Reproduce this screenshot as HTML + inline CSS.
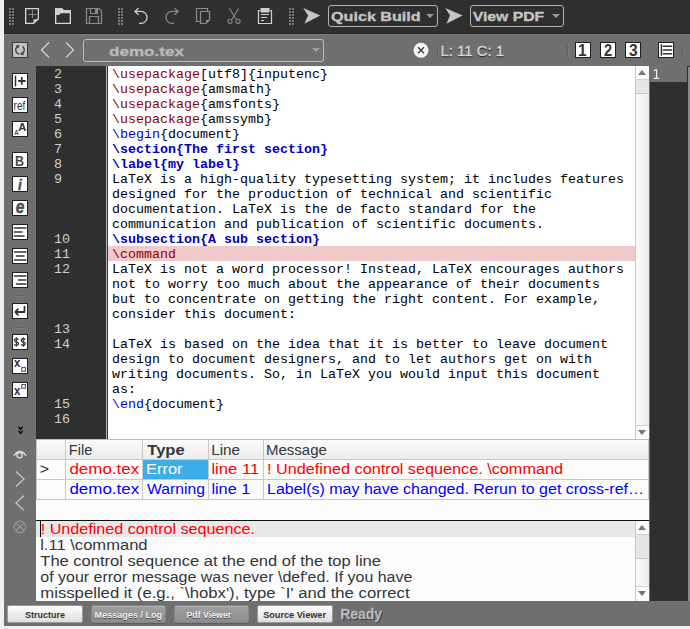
<!DOCTYPE html>
<html><head><meta charset="utf-8">
<style>
*{margin:0;padding:0;box-sizing:border-box}
html,body{width:690px;height:629px;overflow:hidden;background:#eff0f1;font-family:"Liberation Sans",sans-serif;position:relative}
.a{position:absolute}
svg{position:absolute;overflow:visible}
#top{left:4px;top:0;width:686px;height:34px;background:#2f2f2f}
#main{left:4px;top:34px;width:686px;height:592px;background:#6f6f6f}
#gutter{left:36px;top:66px;width:70px;height:373px;background:#2f2f2f}
#gutline{left:106px;top:66px;width:2px;height:373px;background:#b8b8b8;border-right:1px solid #2f2f2f}
#editor{left:108px;top:66px;width:527px;height:373px;background:#fff;overflow:hidden}
.ln{position:absolute;left:54px;top:67px;font-family:"Liberation Mono",monospace;font-size:13.33px;color:#cfcfcf;line-height:15px;white-space:pre}
.code{position:absolute;left:4px;top:1px;white-space:pre;font-family:"Liberation Mono",monospace;font-size:13.33px;line-height:15px;color:#000}
.kw{color:#8b0000}
.bl{color:#0000d8}
.bd{color:#0000c0;font-weight:bold}
#vsb{left:635px;top:66px;width:14px;height:373px;background:linear-gradient(90deg,#fbfbfb,#eceded);border-left:1px solid #c8c8c8}
#rpane{left:650px;top:82px;width:37px;height:519px;background:#2f2f2f}
#rline{left:687px;top:66px;width:3px;height:535px;background:#888;border-left:1px solid #2b2f33;border-top:1px solid #2b2f33}
.combo{position:absolute;border:1px solid #b4b4b4;border-radius:3px}
.tri{position:absolute;width:0;height:0;border-left:4px solid transparent;border-right:4px solid transparent;border-top:4px solid #9a9a9a}
.ltb{position:absolute;left:12px;width:16px;height:16px;background:#fff;border:1px solid #202020;overflow:hidden}
.sep{position:absolute;left:12px;width:16px;height:1px;background:#7e7e7e}
.tbl{left:36px;top:439px;width:613px;height:81px;background:#fcfcfc;border-top:1px solid #bdbdbd}
.cell{position:absolute;font-size:14px;line-height:20px;white-space:pre}
.log{left:36px;top:520px;width:613px;height:81px;background:#fcfcfc;border-top:1px solid #111;overflow:hidden}
.lg{position:absolute;left:4px;font-size:14px;line-height:16px;color:#31363b;white-space:pre}
.btn{position:absolute;top:605px;height:18px;border-radius:2px}
.bl1{background:linear-gradient(#fdfdfd,#dedede);border:1px solid #9a9a9a;color:#2a2a2a}
.bl2{background:linear-gradient(#a0a0a0,#8c8c8c);border:1px solid #858585;box-shadow:inset 0 1px 0 #adadad,0 1px 0 #5e5e5e}
</style></head>
<body>
<div class="a" id="top"></div>
<div class="a" id="main"></div>
<div class="a" style="left:4px;top:33px;width:686px;height:1px;background:#242424"></div>
<div class="a" style="left:4px;top:34px;width:686px;height:1px;background:#7b7b7b"></div>

<!-- top toolbar icons -->
<svg width="690" height="34" style="left:0;top:0">
 <g fill="#7a7a7a">
  <rect x="9" y="8" width="2" height="2"/><rect x="12" y="8" width="2" height="2"/>
  <rect x="9" y="11" width="2" height="2"/><rect x="12" y="11" width="2" height="2"/>
  <rect x="9" y="14" width="2" height="2"/><rect x="12" y="14" width="2" height="2"/>
  <rect x="9" y="17" width="2" height="2"/><rect x="12" y="17" width="2" height="2"/>
  <rect x="9" y="20" width="2" height="2"/><rect x="12" y="20" width="2" height="2"/>
  <rect x="9" y="23" width="2" height="2"/><rect x="12" y="23" width="2" height="2"/>
  <rect x="118" y="8" width="2" height="2"/><rect x="121" y="8" width="2" height="2"/>
  <rect x="118" y="11" width="2" height="2"/><rect x="121" y="11" width="2" height="2"/>
  <rect x="118" y="14" width="2" height="2"/><rect x="121" y="14" width="2" height="2"/>
  <rect x="118" y="17" width="2" height="2"/><rect x="121" y="17" width="2" height="2"/>
  <rect x="118" y="20" width="2" height="2"/><rect x="121" y="20" width="2" height="2"/>
  <rect x="118" y="23" width="2" height="2"/><rect x="121" y="23" width="2" height="2"/>
  <rect x="289" y="8" width="2" height="2"/><rect x="292" y="8" width="2" height="2"/>
  <rect x="289" y="11" width="2" height="2"/><rect x="292" y="11" width="2" height="2"/>
  <rect x="289" y="14" width="2" height="2"/><rect x="292" y="14" width="2" height="2"/>
  <rect x="289" y="17" width="2" height="2"/><rect x="292" y="17" width="2" height="2"/>
  <rect x="289" y="20" width="2" height="2"/><rect x="292" y="20" width="2" height="2"/>
  <rect x="289" y="23" width="2" height="2"/><rect x="292" y="23" width="2" height="2"/>
 </g>
 <!-- new -->
 <path d="M25.65 8.65H38.35V19L33.5 23.35H25.65Z" fill="none" stroke="#d6d6d6" stroke-width="1.3"/>
 <path d="M33.5 23.5V19.25H38.5Z" fill="#cfcfcf"/>
 <path d="M32.5 10V18M28.5 14.5H36.5" stroke="#8a8a8a" stroke-width="1"/>
 <!-- open -->
 <path d="M55 8H62L64 10H71V13.3H61L59 15H55Z" fill="#cfcfcf"/>
 <path d="M55.65 13.5V23.35H70.35V13" fill="none" stroke="#d6d6d6" stroke-width="1.3"/>
 <!-- save -->
 <path d="M86.5 8.5H99L101.5 11V23.5H86.5Z" fill="none" stroke="#8a8a8a" stroke-width="1.2"/>
 <path d="M90.5 8.5V13.5H97.5V8.5M89.5 23.5V16.5H98.5V23.5" fill="none" stroke="#8a8a8a" stroke-width="1.2"/>
 <rect x="95" y="9" width="2" height="4" fill="#8a8a8a"/>
 <!-- undo -->
 <path d="M138.5 8L135 11.4L138.5 14.8M135 11.4H141A6 6 0 0 1 141 23.4H139" fill="none" stroke="#d0d0d0" stroke-width="1.3"/>
 <!-- redo -->
 <path d="M174.5 8L178 11.4L174.5 14.8M178 11.4H172A6 6 0 0 0 172 23.4H174" fill="none" stroke="#8a8a8a" stroke-width="1.3"/>
 <!-- copy -->
 <path d="M200.5 21.5H196.5V8.5H207.5V11" fill="none" stroke="#8c8c8c" stroke-width="1.2"/>
 <path d="M200.5 11.5H209.5V20L206 23.5H200.5Z" fill="none" stroke="#8c8c8c" stroke-width="1.2"/>
 <path d="M206 23.5V20H209.5Z" fill="#8c8c8c"/>
 <!-- cut -->
 <path d="M229.5 8.5L236 19.2M238.5 8.5L232 19.2" stroke="#8a8a8a" stroke-width="1.1"/>
 <circle cx="230" cy="21.3" r="2.1" fill="none" stroke="#8a8a8a" stroke-width="1.1"/>
 <circle cx="238" cy="21.3" r="2.1" fill="none" stroke="#8a8a8a" stroke-width="1.1"/>
 <!-- paste -->
 <path d="M260 10.5H258.5V23.5H271.5V10.5H270" fill="none" stroke="#d0d0d0" stroke-width="1.2"/>
 <rect x="260.5" y="8" width="9" height="4.5" fill="#cfcfcf"/>
 <path d="M261 14.5H269M261 17.5H267M261 20.5H264" stroke="#d0d0d0" stroke-width="1"/>
 <!-- run arrows -->
 <path d="M303.3 8L320.2 15.5L304.4 23.8L308 15.5Z" fill="#c4c4c4"/>
 <path d="M445.3 8L462.6 15.5L446.4 23.7L450 15.5Z" fill="#c4c4c4"/>
</svg>
<div class="combo" style="left:328px;top:5px;width:110px;height:22px;"></div>
<div class="tri" style="left:426px;top:14px"></div>
<div class="combo" style="left:470px;top:5px;width:94px;height:22px;"></div>
<div class="tri" style="left:552px;top:14px"></div>

<!-- second row -->
<svg width="16" height="16" style="left:12px;top:42px">
 <rect x="0.5" y="0.5" width="15" height="15" fill="#c2c2c2" stroke="#3a3a3a"/>
 <path d="M5.5 4.5A4.3 4.3 0 0 0 7.3 12.2M10.5 4.5A4.3 4.3 0 0 1 8.7 12.2" fill="none" stroke="#3a3a3a" stroke-width="1.2"/>
 <path d="M4 3L7.6 3.6L6 6.6Z M12 13L8.4 12.4L10 9.4Z" fill="#3a3a3a"/>
</svg>
<svg width="690" height="30" style="left:0;top:34px">
 <path d="M49 8.5L41.5 16L49 23.5M66 8.5L73.5 16L66 23.5" fill="none" stroke="#d6d6d6" stroke-width="1.2"/>
 <circle cx="421" cy="16.2" r="7.5" fill="#f4f4f4"/>
 <path d="M418 13.2L424 19.2M424 13.2L418 19.2" stroke="#3a3a3a" stroke-width="1.3"/>
 <rect x="437" y="11" width="1" height="11" fill="#626262"/><rect x="438" y="11" width="1" height="11" fill="#7a7a7a"/>
 <rect x="567" y="11" width="1" height="11" fill="#626262"/><rect x="568" y="11" width="1" height="11" fill="#7a7a7a"/>
 <rect x="682" y="11" width="1" height="11" fill="#626262"/><rect x="683" y="11" width="1" height="11" fill="#7a7a7a"/>
</svg>
<div class="combo" style="left:83px;top:39px;width:241px;height:23px;border-color:#bdbdbd"></div>
<div class="tri" style="left:312px;top:48px;border-top-color:#a0a0a0"></div>
<svg width="120" height="20" style="left:570px;top:40px">
 <rect x="5.5" y="2.5" width="15" height="15" fill="#fff" stroke="#1e1e1e"/>
 <rect x="30.5" y="2.5" width="15" height="15" fill="#fff" stroke="#1e1e1e"/>
 <rect x="55.5" y="2.5" width="15" height="15" fill="#fff" stroke="#1e1e1e"/>
 <rect x="88.5" y="2.5" width="15" height="15" fill="#fff" stroke="#1e1e1e"/>
 <path d="M91.4 4.2V15.7" stroke="#333" stroke-width="1.5"/>
 <path d="M93.3 6.2H101.6M93.3 10H101.6M93.3 13.8H101.6" stroke="#333" stroke-width="1.6" stroke-linecap="round"/>
</svg>

<!-- left toolbar -->
<svg width="40" height="420" style="left:0;top:0">
 <rect x="12.5" y="73.5" width="15" height="15" fill="#fff" stroke="#1e1e1e" stroke-width="1"/>
 <rect x="12.5" y="97.5" width="15" height="15" fill="#fff" stroke="#1e1e1e" stroke-width="1"/>
 <rect x="12.5" y="121.5" width="15" height="15" fill="#fff" stroke="#1e1e1e" stroke-width="1"/>
 <rect x="12.5" y="152.5" width="15" height="15" fill="#fff" stroke="#1e1e1e" stroke-width="1"/>
 <rect x="12.5" y="176.5" width="15" height="15" fill="#fff" stroke="#1e1e1e" stroke-width="1"/>
 <rect x="12.5" y="200.5" width="15" height="15" fill="#fff" stroke="#1e1e1e" stroke-width="1"/>
 <rect x="12.5" y="224.5" width="15" height="15" fill="#fff" stroke="#1e1e1e" stroke-width="1"/>
 <rect x="12.5" y="248.5" width="15" height="15" fill="#fff" stroke="#1e1e1e" stroke-width="1"/>
 <rect x="12.5" y="272.5" width="15" height="15" fill="#fff" stroke="#1e1e1e" stroke-width="1"/>
 <rect x="12.5" y="303.5" width="15" height="15" fill="#fff" stroke="#1e1e1e" stroke-width="1"/>
 <rect x="12.5" y="334.5" width="15" height="15" fill="#fff" stroke="#1e1e1e" stroke-width="1"/>
 <rect x="12.5" y="358.5" width="15" height="15" fill="#fff" stroke="#1e1e1e" stroke-width="1"/>
 <rect x="12.5" y="382.5" width="15" height="15" fill="#fff" stroke="#1e1e1e" stroke-width="1"/>
 <rect x="14" y="145" width="12" height="1" fill="#626262"/><rect x="14" y="146" width="12" height="1" fill="#7a7a7a"/>
 <rect x="14" y="295" width="12" height="1" fill="#626262"/><rect x="14" y="296" width="12" height="1" fill="#7a7a7a"/>
 <rect x="14" y="327" width="12" height="1" fill="#626262"/><rect x="14" y="328" width="12" height="1" fill="#7a7a7a"/>
 <path d="M15.5 75.5V86.5" stroke="#333" stroke-width="1.5"/>
 <path d="M18.2 81H25.6M21.8 77V84.8" stroke="#333" stroke-width="1.8"/>
 <path d="M14.5 228H25.8M14.5 232H22M14.5 236H24" stroke="#363636" stroke-width="1.6" stroke-linecap="round"/>
 <path d="M14.5 252H25.8M16.5 256H24M14.5 260H25.8" stroke="#363636" stroke-width="1.6" stroke-linecap="round"/>
 <path d="M14.5 276H25.8M18.5 280H25.8M16.5 284H25.8" stroke="#363636" stroke-width="1.6" stroke-linecap="round"/>
 <path d="M24.5 306.6V312H15.4M17.9 309.2L15.2 312L17.9 314.8" fill="none" stroke="#333" stroke-width="1.8" stroke-linecap="round" stroke-linejoin="round"/>
 <path d="M18.40 339.8C17.90 339 17.20 338.7 16.40 338.7C15.30 338.7 14.50 339.4 14.50 340.4C14.50 341.5 15.40 341.8 16.40 342.0C17.50 342.2 18.40 342.6 18.40 343.6C18.40 344.7 17.50 345.3 16.40 345.3C15.40 345.3 14.60 344.9 14.20 344.3M25.25 339.8C24.75 339 24.05 338.7 23.25 338.7C22.15 338.7 21.35 339.4 21.35 340.4C21.35 341.5 22.25 341.8 23.25 342.0C24.35 342.2 25.25 342.6 25.25 343.6C25.25 344.7 24.35 345.3 23.25 345.3C22.25 345.3 21.45 344.9 21.05 344.3" fill="none" stroke="#3a3a3a" stroke-width="1.35"/><path d="M16.4 337.2V346.8M23.25 337.2V346.8" stroke="#3a3a3a" stroke-width="1.1"/>
 <rect x="21.8" y="367.5" width="3.6" height="3.8" fill="none" stroke="#555" stroke-width="1.1"/>
 <rect x="21.8" y="384.6" width="3.6" height="3.6" fill="none" stroke="#555" stroke-width="1.1"/>
</svg>
<svg width="32" height="120" style="left:4px;top:420px">
 <path d="M14.5 6.6L16.55 9.3L18.6 6.6M14.5 10.6L16.55 13.3L18.6 10.6" fill="none" stroke="#000" stroke-width="1.35"/>
 <path d="M10 35.6Q16 27.4 22 35.6" fill="none" stroke="#e0e0e0" stroke-width="1.3"/>
 <circle cx="15.6" cy="35.2" r="2.6" fill="none" stroke="#e0e0e0" stroke-width="1.3"/>
 <path d="M12 51.5L20 59L12 66.5" fill="none" stroke="#cdcdcd" stroke-width="1.2"/>
 <path d="M20 75.7L12 82.9L20 90.4" fill="none" stroke="#cdcdcd" stroke-width="1.2"/>
 <circle cx="15.9" cy="106.8" r="5.8" fill="none" stroke="#9a9a9a" stroke-width="1.1"/>
 <path d="M11.8 102.7L20 110.9M20 102.7L11.8 110.9" stroke="#9a9a9a" stroke-width="1.1"/>
</svg>

<!-- editor -->
<div class="a" id="gutter"></div>
<div class="a" id="gutline"></div>
<div class="a" id="editor">
<div style="position:absolute;left:0;top:180px;width:528px;height:15px;background:#f0caca"></div>
<div class="code"><span class="kw">\usepackage</span>[utf8]{inputenc}
<span class="kw">\usepackage</span>{amsmath}
<span class="kw">\usepackage</span>{amsfonts}
<span class="kw">\usepackage</span>{amssymb}
<span class="bl">\begin</span>{document}
<span class="bd">\section{The first section}</span>
<span class="bd">\label{my label}</span>
LaTeX is a high-quality typesetting system; it includes features
designed for the production of technical and scientific
documentation. LaTeX is the de facto standard for the
communication and publication of scientific documents.
<span class="bd">\subsection{A sub section}</span>
<span class="kw">\command</span>
LaTeX is not a word processor! Instead, LaTeX encourages authors
not to worry too much about the appearance of their documents
but to concentrate on getting the right content. For example,
consider this document:

LaTeX is based on the idea that it is better to leave document
design to document designers, and to let authors get on with
writing documents. So, in LaTeX you would input this document
as:
<span class="bl">\end</span>{document}
</div>
</div>
<div class="ln">2
3
4
5
6
7
8
9



10
11
12



13
14



15
16</div>
<div class="a" id="vsb"></div>
<div class="a" style="left:636px;top:66px;width:13px;height:13px;background:#fafafa"></div>
<div class="tri" style="left:638px;top:70px;border-top:0;border-bottom:5px solid #72767b;border-left-width:4px;border-right-width:4px"></div>
<div class="a" style="left:636px;top:79px;width:13px;height:15px;background:#e4e6e7;border-top:1px solid #cfd1d2;border-bottom:1px solid #c4c6c8"></div>
<div class="a" style="left:636px;top:425px;width:13px;height:14px;background:#fafafa;border-top:1px solid #cfd1d2"></div>
<div class="tri" style="left:638px;top:430px;border-top:5px solid #72767b;border-left-width:4px;border-right-width:4px"></div>
<div class="a" style="left:650px;top:66px;width:37px;height:16px;background:#6f6f6f"></div>
<svg width="20" height="16" style="left:650px;top:66px"><path d="M6.6 3.6V12.4M4 4.6L6.6 3.3M3.8 12.3H9.2" fill="none" stroke="#eeeeee" stroke-width="1.3"/></svg>
<div class="a" id="rpane"></div>
<div class="a" id="rline"></div>

<!-- table -->
<div class="a tbl">
 <div class="a" style="left:0;top:0;width:613px;height:20px;background:linear-gradient(#fbfbfb,#ececec);border-bottom:1px solid #c6c6c6"></div>
 <div class="a" style="left:0;top:39px;width:613px;height:1px;background:#c8c8c8"></div>
 <div class="a" style="left:0;top:59px;width:613px;height:1px;background:#c8c8c8"></div>
 <div class="a" style="left:29px;top:0;width:1px;height:59px;background:#c8c8c8"></div>
 <div class="a" style="left:106px;top:0;width:1px;height:59px;background:#c8c8c8"></div>
 <div class="a" style="left:172px;top:0;width:1px;height:59px;background:#c8c8c8"></div>
 <div class="a" style="left:227px;top:0;width:1px;height:59px;background:#c8c8c8"></div>
 <div class="a" style="left:0;top:0;width:1px;height:59px;background:#c8c8c8"></div>
 <div class="a" style="left:612px;top:0;width:1px;height:59px;background:#c8c8c8"></div>
 <div class="a" style="left:107px;top:20px;width:65px;height:19px;background:#3daee9"></div>
</div>

<!-- log -->
<div class="a log">
 <div class="a" style="left:0;top:0;width:600px;height:16px;background:#e8e8e8"></div>
 <div class="a" style="left:4px;top:0px;width:1px;height:16px;background:#000"></div>
 <div class="a" style="left:599px;top:0;width:14px;height:80px;background:linear-gradient(90deg,#fbfbfb,#eceded);border-left:1px solid #c8c8c8"></div>
 <div class="a" style="left:600px;top:0px;width:13px;height:13px;background:#fafafa"></div>
 <div class="tri" style="left:602px;top:4px;border-top:0;border-bottom:5px solid #72767b"></div>
 <div class="a" style="left:600px;top:13px;width:13px;height:25px;background:#e4e6e7;border-top:1px solid #cfd1d2;border-bottom:1px solid #c4c6c8"></div>
 <div class="a" style="left:600px;top:65px;width:13px;height:15px;background:#fafafa;border-top:1px solid #cfd1d2"></div>
 <div class="tri" style="left:602px;top:70px;border-top:5px solid #72767b"></div>
</div>

<!-- bottom buttons -->
<div class="btn bl1" style="left:7px;width:76px"></div>
<div class="btn bl2" style="left:91px;width:75px"></div>
<div class="btn bl2" style="left:174px;width:75px"></div>
<div class="btn bl1" style="left:257px;width:76px"></div>
<svg width="690" height="629" style="left:0;top:0;position:absolute">
 <text x="331.00" y="20.80" font-size="13.4" textLength="89.70" lengthAdjust="spacingAndGlyphs" font-weight="bold" fill="#c4c4c4" stroke="#c4c4c4" stroke-width="0.35" xml:space="preserve">Quick Build</text>
 <text x="472.70" y="20.80" font-size="13.4" textLength="71.50" lengthAdjust="spacingAndGlyphs" font-weight="bold" fill="#c4c4c4" stroke="#c4c4c4" stroke-width="0.35" xml:space="preserve">View PDF</text>
 <text x="109.10" y="55.60" font-size="13.6" textLength="74.80" lengthAdjust="spacingAndGlyphs" font-weight="bold" fill="#b9b9b9" stroke="#b9b9b9" stroke-width="0.35" xml:space="preserve">demo.tex</text>
 <text x="440.50" y="57.00" font-size="14" textLength="63.60" lengthAdjust="spacingAndGlyphs" fill="#1a1a1a" stroke="#1a1a1a" stroke-width="0.45" xml:space="preserve">L: 11 C: 1</text>
 <text x="440.50" y="56.00" font-size="14" textLength="63.60" lengthAdjust="spacingAndGlyphs" fill="#d6d6d6" stroke="#d6d6d6" stroke-width="0.45" xml:space="preserve">L: 11 C: 1</text>
 <text x="68.70" y="455.00" font-size="14" textLength="23.60" lengthAdjust="spacingAndGlyphs" fill="#31363b" xml:space="preserve">File</text>
 <text x="147.30" y="455.00" font-size="14" textLength="37.30" lengthAdjust="spacingAndGlyphs" font-weight="bold" fill="#31363b" xml:space="preserve">Type</text>
 <text x="211.20" y="455.00" font-size="14" textLength="28.80" lengthAdjust="spacingAndGlyphs" fill="#31363b" xml:space="preserve">Line</text>
 <text x="266.10" y="455.00" font-size="14" textLength="60.70" lengthAdjust="spacingAndGlyphs" fill="#31363b" xml:space="preserve">Message</text>
 <text x="39.70" y="474.00" font-size="14" textLength="9.30" lengthAdjust="spacingAndGlyphs" fill="#31363b" xml:space="preserve">&gt;</text>
 <text x="69.40" y="474.00" font-size="14" textLength="69.80" lengthAdjust="spacingAndGlyphs" fill="#ff0000" xml:space="preserve">demo.tex</text>
 <text x="146.00" y="474.00" font-size="14" textLength="36.60" lengthAdjust="spacingAndGlyphs" fill="#fcfcfc" xml:space="preserve">Error</text>
 <text x="211.40" y="474.00" font-size="14" textLength="47.80" lengthAdjust="spacingAndGlyphs" fill="#ff0000" xml:space="preserve">line 11</text>
 <text x="267.00" y="474.00" font-size="14" textLength="296.00" lengthAdjust="spacingAndGlyphs" fill="#ff0000" xml:space="preserve">! Undefined control sequence. \command</text>
 <text x="69.40" y="493.70" font-size="14" textLength="69.80" lengthAdjust="spacingAndGlyphs" fill="#0000ff" xml:space="preserve">demo.tex</text>
 <text x="147.00" y="493.70" font-size="14" textLength="58.00" lengthAdjust="spacingAndGlyphs" fill="#0000ff" xml:space="preserve">Warning</text>
 <text x="211.40" y="493.70" font-size="14" textLength="38.90" lengthAdjust="spacingAndGlyphs" fill="#0000ff" xml:space="preserve">line 1</text>
 <text x="267.00" y="493.70" font-size="14" textLength="377.00" lengthAdjust="spacingAndGlyphs" fill="#0000ff" xml:space="preserve">Label(s) may have changed. Rerun to get cross-ref…</text>
 <text x="40.70" y="533.50" font-size="14" textLength="214.30" lengthAdjust="spacingAndGlyphs" fill="#ff0000" xml:space="preserve">! Undefined control sequence.</text>
 <text x="40.20" y="550.00" font-size="14" textLength="107.40" lengthAdjust="spacingAndGlyphs" fill="#31363b" xml:space="preserve">l.11 \command</text>
 <text x="40.30" y="565.90" font-size="14" textLength="340.70" lengthAdjust="spacingAndGlyphs" fill="#31363b" xml:space="preserve">The control sequence at the end of the top line</text>
 <text x="40.30" y="581.70" font-size="14" textLength="372.00" lengthAdjust="spacingAndGlyphs" fill="#31363b" xml:space="preserve">of your error message was never \def&#x27;ed. If you have</text>
 <text x="40.30" y="597.60" font-size="14" textLength="369.30" lengthAdjust="spacingAndGlyphs" fill="#31363b" xml:space="preserve">misspelled it (e.g., `\hobx&#x27;), type `I&#x27; and the correct</text>
 <text x="25.10" y="617.90" font-size="9.6" textLength="39.90" lengthAdjust="spacingAndGlyphs" font-weight="bold" fill="#333333" xml:space="preserve">Structure</text>
 <text x="94.60" y="618.90" font-size="9.6" textLength="67.50" lengthAdjust="spacingAndGlyphs" font-weight="bold" fill="#4a4a4a" xml:space="preserve">Messages / Log</text>
 <text x="94.60" y="617.90" font-size="9.6" textLength="67.50" lengthAdjust="spacingAndGlyphs" font-weight="bold" fill="#f2f2f2" xml:space="preserve">Messages / Log</text>
 <text x="186.50" y="618.90" font-size="9.6" textLength="44.70" lengthAdjust="spacingAndGlyphs" font-weight="bold" fill="#4a4a4a" xml:space="preserve">Pdf Viewer</text>
 <text x="186.50" y="617.90" font-size="9.6" textLength="44.70" lengthAdjust="spacingAndGlyphs" font-weight="bold" fill="#f2f2f2" xml:space="preserve">Pdf Viewer</text>
 <text x="263.20" y="617.80" font-size="9.6" textLength="62.80" lengthAdjust="spacingAndGlyphs" font-weight="bold" fill="#333333" xml:space="preserve">Source Viewer</text>
 <text x="341.30" y="620.30" font-size="14" textLength="41.80" lengthAdjust="spacingAndGlyphs" font-weight="bold" fill="#3a3a3a" stroke="#3a3a3a" stroke-width="0.3" xml:space="preserve">Ready</text>
 <text x="340.30" y="619.30" font-size="14" textLength="41.80" lengthAdjust="spacingAndGlyphs" font-weight="bold" fill="#b9b9b9" stroke="#b9b9b9" stroke-width="0.3" xml:space="preserve">Ready</text>
 <text x="13.60" y="109.80" font-size="13.3" textLength="11.70" lengthAdjust="spacingAndGlyphs" fill="#333333" xml:space="preserve">ref</text>
 <text x="18.20" y="130.80" font-size="10.7" textLength="8.10" lengthAdjust="spacingAndGlyphs" font-weight="bold" fill="#333333" xml:space="preserve">A</text>
 <text x="14.00" y="134.90" font-size="6.8" textLength="4.90" lengthAdjust="spacingAndGlyphs" font-weight="bold" fill="#555555" xml:space="preserve">A</text>
 <text x="15.00" y="165.60" font-size="15" textLength="9.00" lengthAdjust="spacingAndGlyphs" font-weight="bold" fill="#4a4a4a" xml:space="preserve">B</text>
 <text x="18.00" y="189.70" font-size="15" textLength="3.70" lengthAdjust="spacingAndGlyphs" font-weight="bold" font-style="italic" fill="#4a4a4a" stroke="#4a4a4a" stroke-width="0.4" xml:space="preserve">i</text>
 <text x="15.70" y="212.90" font-size="18.7" textLength="8.60" lengthAdjust="spacingAndGlyphs" font-weight="bold" font-style="italic" fill="#4e4e4e" stroke="#4e4e4e" stroke-width="0.5" xml:space="preserve">e</text>
 <text x="14.10" y="366.50" font-size="12.3" textLength="6.40" lengthAdjust="spacingAndGlyphs" font-weight="bold" fill="#333333" xml:space="preserve">x</text>
 <text x="14.10" y="395.00" font-size="12.3" textLength="6.40" lengthAdjust="spacingAndGlyphs" font-weight="bold" fill="#333333" xml:space="preserve">x</text>
 <text x="578.00" y="55.70" font-size="16" textLength="8.60" lengthAdjust="spacingAndGlyphs" font-weight="bold" fill="#333333" xml:space="preserve">1</text>
 <text x="603.90" y="56.00" font-size="16" textLength="8.10" lengthAdjust="spacingAndGlyphs" font-weight="bold" fill="#333333" xml:space="preserve">2</text>
 <text x="629.00" y="56.00" font-size="16" textLength="8.70" lengthAdjust="spacingAndGlyphs" font-weight="bold" fill="#333333" xml:space="preserve">3</text>
</svg>
</body></html>
